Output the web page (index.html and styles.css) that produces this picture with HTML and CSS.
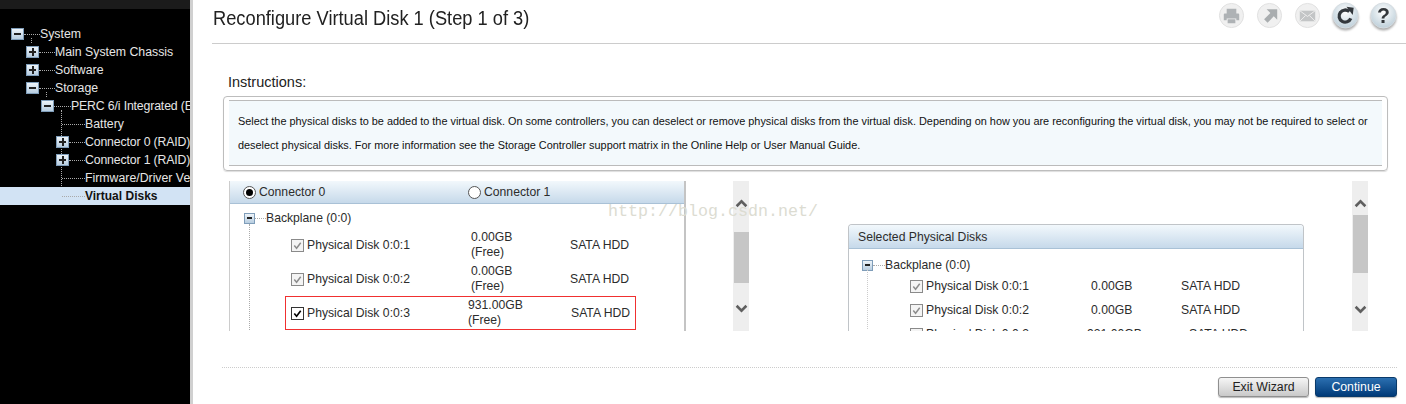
FILE: index.html
```html
<!DOCTYPE html>
<html lang="en">
<head>
<meta charset="utf-8">
<title>Reconfigure Virtual Disk</title>
<link rel="stylesheet" href="styles.css">
</head>
<body>
<div class="app">
  <aside class="sidebar">
    <div class="sidebar-top"></div>
    <ul class="tree">
      <li class="node l0 stem-system"><span class="tog minus"></span><span class="dash short"></span><span>System</span></li>
      <li class="node l1"><span class="tog plus"></span><span class="dash"></span><span>Main System Chassis</span></li>
      <li class="node l1"><span class="tog plus"></span><span class="dash"></span><span>Software</span></li>
      <li class="node l1 stem-storage"><span class="tog minus"></span><span class="dash"></span><span>Storage</span></li>
      <li class="node l2 stem-perc"><span class="tog minus"></span><span class="dash wide"></span><span class="fit">PERC 6/i Integrated (Embedded)</span></li>
      <li class="node l3"><span class="leaf"></span><span>Battery</span></li>
      <li class="node l3t"><span class="tog plus"></span><span class="dash"></span><span class="fit">Connector 0 (RAID)</span></li>
      <li class="node l3t"><span class="tog plus"></span><span class="dash"></span><span class="fit">Connector 1 (RAID)</span></li>
      <li class="node l3"><span class="leaf"></span><span>Firmware/Driver Versions</span></li>
      <li class="node l3 selected"><span class="leaf"></span><span>Virtual Disks</span></li>
    </ul>
  </aside>
  <div class="divider"></div>
  <main class="main">
    <header class="head">
      <h1>Reconfigure Virtual Disk 1 (Step 1 of 3)</h1>
      <div class="tools">
        <svg class="tool" viewBox="0 0 28 28"><circle cx="14" cy="14" r="12.5" fill="#f0f0f0" stroke="#e0e0e0"/><path d="M9 7h10v5H9zM7 12h14a1 1 0 0 1 1 1v6h-3v-2H9v2H6v-6a1 1 0 0 1 1-1zM10 18h8v4h-8z" fill="#aeb2b5"/></svg>
        <svg class="tool" viewBox="0 0 28 28"><circle cx="14" cy="14" r="12.5" fill="#f0f0f0" stroke="#e0e0e0"/><path d="M11 7.5h11v11l-3.6-3.6-6.4 6.6-3.6-3.6 6.5-6.5z" fill="#a9adaf"/></svg>
        <svg class="tool" viewBox="0 0 28 28"><circle cx="14" cy="14" r="12.5" fill="#f0f0f0" stroke="#e0e0e0"/><path d="M6 9h16v11H6z" fill="#c3c5c6"/><path d="M6 9l8 6 8-6M6 20l6-6M22 20l-6-6" fill="none" stroke="#eee"/></svg>
        <svg class="tool strong" viewBox="0 0 28 28"><defs><radialGradient id="orb" cx="50%" cy="35%" r="70%"><stop offset="0" stop-color="#fff"/><stop offset="1" stop-color="#b9ccd7"/></radialGradient></defs><circle cx="14" cy="14" r="13" fill="url(#orb)" stroke="#d5dde2"/><path d="M19.500 17a6.300 6.300 0 1 1-1.500-7" fill="none" stroke="#33383d" stroke-width="3.400"/><path d="M15 5l7.500 1-1 7.500z" fill="#33383d"/></svg>
        <svg class="tool strong" viewBox="0 0 28 28"><circle cx="14" cy="14" r="13" fill="url(#orb)" stroke="#d5dde2"/><text x="14" y="22" text-anchor="middle" class="qmark">?</text></svg>
      </div>
    </header>
    <div class="body">
      <h2 class="ins-title">Instructions:</h2>
      <section class="ins-box">
        <p>Select the physical disks to be added to the virtual disk. On some controllers, you can deselect or remove physical disks from the virtual disk. Depending on how you are reconfiguring the virtual disk, you may not be required to select or deselect physical disks. For more information see the Storage Controller support matrix in the Online Help or User Manual Guide.</p>
      </section>
      <div class="split">
        <section class="panel left">
          <div class="panel-head radios">
            <label class="radio-item"><span class="radio on"></span>Connector 0</label>
            <label class="radio-item"><span class="radio"></span>Connector 1</label>
          </div>
          <div class="bp"><span class="tog small minus"></span><span class="dash tiny"></span>Backplane (0:0)</div>
          <div class="disk"><span class="chk off"><svg viewBox="0 0 12 12"><path d="M2.500 6l2.500 3 4.500-6" fill="none" stroke="#8c8c8c" stroke-width="1.600"/></svg></span><span class="d-name">Physical Disk 0:0:1</span><span class="d-size">0.00GB<br>(Free)</span><span class="d-type">SATA HDD</span></div>
          <div class="disk"><span class="chk off"><svg viewBox="0 0 12 12"><path d="M2.500 6l2.500 3 4.500-6" fill="none" stroke="#8c8c8c" stroke-width="1.600"/></svg></span><span class="d-name">Physical Disk 0:0:2</span><span class="d-size">0.00GB<br>(Free)</span><span class="d-type">SATA HDD</span></div>
          <div class="disk marked"><span class="chk"><svg viewBox="0 0 12 12"><path d="M2.500 6l2.500 3 4.500-6" fill="none" stroke="#000" stroke-width="1.800"/></svg></span><span class="d-name">Physical Disk 0:0:3</span><span class="d-size">931.00GB<br>(Free)</span><span class="d-type">SATA HDD</span></div>
        </section>
        <div class="scroll s1">
          <svg class="arrow" viewBox="0 0 12 8"><path d="M1.500 6.500L6 2l4.500 4.500" fill="none" stroke="#5f5f5f" stroke-width="2.400"/></svg>
          <div class="thumb"></div>
          <svg class="arrow down" viewBox="0 0 12 8"><path d="M1.500 1.500L6 6l4.500-4.500" fill="none" stroke="#5f5f5f" stroke-width="2.400"/></svg>
        </div>
        <section class="panel right">
          <div class="panel-head title">Selected Physical Disks</div>
          <div class="bp"><span class="tog small minus"></span><span class="dash tiny"></span>Backplane (0:0)</div>
          <div class="sdisk"><span class="chk off"><svg viewBox="0 0 12 12"><path d="M2.500 6l2.500 3 4.500-6" fill="none" stroke="#8c8c8c" stroke-width="1.600"/></svg></span><span class="s-name">Physical Disk 0:0:1</span><span class="s-size">0.00GB</span><span class="s-type">SATA HDD</span></div>
          <div class="sdisk"><span class="chk off"><svg viewBox="0 0 12 12"><path d="M2.500 6l2.500 3 4.500-6" fill="none" stroke="#8c8c8c" stroke-width="1.600"/></svg></span><span class="s-name">Physical Disk 0:0:2</span><span class="s-size">0.00GB</span><span class="s-type">SATA HDD</span></div>
          <div class="sdisk third"><span class="chk off"><svg viewBox="0 0 12 12"><path d="M2.500 6l2.500 3 4.500-6" fill="none" stroke="#8c8c8c" stroke-width="1.600"/></svg></span><span class="s-name">Physical Disk 0:0:3</span><span class="s-size">931.00GB</span><span class="s-type">SATA HDD</span></div>
        </section>
        <div class="scroll s2">
          <svg class="arrow" viewBox="0 0 12 8"><path d="M1.500 6.500L6 2l4.500 4.500" fill="none" stroke="#5f5f5f" stroke-width="2.400"/></svg>
          <div class="thumb"></div>
          <svg class="arrow down" viewBox="0 0 12 8"><path d="M1.500 1.500L6 6l4.500-4.500" fill="none" stroke="#5f5f5f" stroke-width="2.400"/></svg>
        </div>
      </div>
      <footer class="foot">
        <button class="btn grey">Exit Wizard</button>
        <button class="btn blue">Continue</button>
      </footer>
    </div>
    <div class="watermark">http://blog.csdn.net/</div>
  </main>
</div>
</body>
</html>
```
FILE: styles.css
```css
* { box-sizing: border-box; }
html, body { margin: 0; height: 404px; overflow: hidden; background: #fff; }
body { font-family: "Liberation Sans", Arial, sans-serif; color: #222; }
.app { display: flex; height: 404px; }

.sidebar { width: 190px; background: #000; overflow: hidden; flex: none; }
.sidebar-top { height: 9px; background: #1b1b1b; }
.tree { list-style: none; margin: 16px 0 0; padding: 0; position: relative; }
.node { height: 18px; display: flex; align-items: center; font-size: 12.300px; color: #e6e6e6; white-space: nowrap; position: relative; }
.fit { letter-spacing: -0.150px; }
.l0 { padding-left: 11px; }
.l1 { padding-left: 26px; }
.l2 { padding-left: 41px; }
.l3t { padding-left: 56px; }
.l3 { padding-left: 62px; }
.selected { background: #d2e3f4; color: #111; font-weight: bold; font-size: 12px; }
.tog { width: 13px; height: 12px; flex: none; border: 1px solid #7f9db9; background: linear-gradient(#eef4f9, #b7cde0); position: relative; }
.tog::before { content: ""; position: absolute; left: 2px; right: 2px; top: 4px; height: 2px; background: #222; }
.tog.plus::after { content: ""; position: absolute; top: 1px; bottom: 1px; left: 4.500px; width: 2px; background: #222; }
.dash { width: 16px; border-top: 1px dotted #aaa; flex: none; }
.dash.wide { width: 17px; }
.leaf { width: 23px; border-top: 1px dotted #aaa; flex: none; }
.stem-system::after, .stem-storage::after, .stem-perc::after { content: ""; position: absolute; border-left: 1px dotted #aaa; }
.stem-system::after { left: 31px; top: 13px; height: 5px; }
.stem-storage::after { left: 46px; top: 13px; height: 5px; }
.stem-perc::after { left: 61px; top: 13px; height: 86px; }

.divider { width: 3px; flex: none; background: #d0d0d0; }

.main { flex: 1; min-width: 0; position: relative; display: flex; flex-direction: column; }
.head { height: 44px; margin-left: 19px; border-bottom: 1px solid #ccc; display: flex; justify-content: space-between; padding: 4px 9px 0 1px; flex: none; }
h1 { margin: 0; font-size: 20px; font-weight: normal; line-height: 28px; color: #222; transform: scaleX(0.913); transform-origin: left; white-space: nowrap; }
.tools { display: flex; gap: 11px; padding-top: 1px; height: 30px; margin-top: -4px; align-items: center; }
.tool { width: 27px; height: 27px; display: block; }
.tool.strong { filter: drop-shadow(0 2px 1px #aaa); }
.qmark { font: bold 22px "Liberation Sans", sans-serif; fill: #33373b; }

.body { padding: 0 9px 0 30px; display: flex; flex-direction: column; flex: 1; }
.ins-title { margin: 29px 0 0 5px; font-size: 14.500px; font-weight: normal; line-height: 18px; color: #222; }
.ins-box { margin-top: 5px; width: 1165px; height: 75px; border: 1px solid #bdbdbd; border-radius: 4px; padding: 3px 5px 5px; box-shadow: 0 1px 1px #ddd; }
.ins-box p { margin: 0; height: 66px; background: #f3f9fc; border-top: 1px solid #bbb; border-bottom: 1px solid #bbb; padding: 8px 9px 0; font-size: 10.900px; line-height: 24px; color: #111; }

.split { display: flex; height: 150px; margin-top: 10px; margin-left: 6px; flex: none; align-items: flex-start; }
.panel { overflow: hidden; font-size: 12.200px; color: #2c2c2c; background: #fff; }
.panel.left { width: 457px; height: 150px; border-left: 1px solid #ccc; border-right: 2px solid #c4c4c4; }
.panel.right { width: 456px; height: 107px; margin: 43px 0 0 99px; border: 1px solid #c0c4c8; border-bottom: 0; border-radius: 4px 4px 0 0; }
.panel-head { background: linear-gradient(#f2f8fc, #c6d9ea); border-bottom: 1px solid #a9c1d6; display: flex; align-items: center; }
.radios { height: 23px; padding-left: 13px; }
.title { height: 24px; padding-left: 9px; }
.radio-item { display: flex; align-items: center; flex: none; gap: 3px; }
.radio-item:first-child { width: 225px; }
.radio { width: 13px; height: 13px; border: 1px solid #555; border-radius: 50%; background: #fff; position: relative; }
.radio.on::after { content: ""; position: absolute; inset: 2px; border-radius: 50%; background: #000; }
.bp { display: flex; align-items: center; position: relative; }
.left .bp { height: 24px; padding: 4px 0 0 14px; }
.right .bp { height: 25px; padding: 7px 0 0 13px; }
.tog.small { width: 11px; height: 11px; }
.tog.small::before { left: 2px; right: 2px; top: 3.500px; }
.dash.tiny { width: 11px; }
.right .dash.tiny { width: 12px; }
.left .bp::after { content: ""; position: absolute; left: 19px; top: 20px; height: 120px; border-left: 1px dotted #aaa; }
.right .bp::after { content: ""; position: absolute; left: 18px; top: 20px; height: 60px; border-left: 1px dotted #ccc; }
.chk { width: 13px; height: 13px; border: 1px solid #333; background: #fff; flex: none; display: block; }
.chk.off { border-color: #8a8a8a; background: #f4f4f4; }
.chk svg { display: block; width: 11px; height: 11px; }
.disk { display: flex; align-items: center; height: 34px; padding-left: 61px; line-height: 15px; }
.d-name { margin-left: 3px; width: 164px; flex: none; }
.d-size { width: 99px; flex: none; }
.disk.marked { margin-left: 55px; width: 351px; height: 34px; border: 1px solid #f03030; padding-left: 5px; }
.marked .d-name { width: 161px; }
.marked .d-size { width: 103px; }
.sdisk { display: flex; align-items: center; height: 24px; padding-left: 61px; }
.s-name { margin-left: 3px; width: 165px; flex: none; }
.s-size { width: 90px; flex: none; }
.third .s-name { width: 161px; }
.third .s-size { width: 102px; }

.scroll { width: 16px; height: 150px; background: #eee; flex: none; display: flex; flex-direction: column; align-items: center; position: relative; }
.s1 { margin-left: 47px; }
.s2 { margin-left: 48px; }
.arrow { width: 13px; height: 9px; display: block; margin-top: 18px; flex: none; }
.thumb { width: 15px; background: #c6c6c6; flex: none; }
.s1 .thumb { height: 51px; margin-top: 24px; }
.s2 .thumb { height: 58px; margin-top: 7px; }
.arrow.down { margin-top: 21px; }
.s2 .arrow.down { margin-top: 32px; }

.foot { margin-top: 36px; margin-left: -1px; border-top: 1px dotted #ccc; padding: 9px 0 0 996px; display: flex; gap: 6px; }
.btn { height: 20px; font: 12.300px "Liberation Sans", sans-serif; border-radius: 3px; padding: 0; box-shadow: 0 1px 1px #bbb; }
.grey { width: 91px; color: #222; border: 1px solid #8f8f8f; background: linear-gradient(#f6f6f6, #c9c9c9); }
.blue { width: 82px; color: #fff; border: 1px solid #0a3a6a; background: linear-gradient(#2b6fb0, #003a78); }

.watermark { position: absolute; left: 415px; top: 203px; font: 16.670px/18px "Liberation Mono", monospace; color: #dcdcd2; white-space: nowrap; pointer-events: none; }
```
